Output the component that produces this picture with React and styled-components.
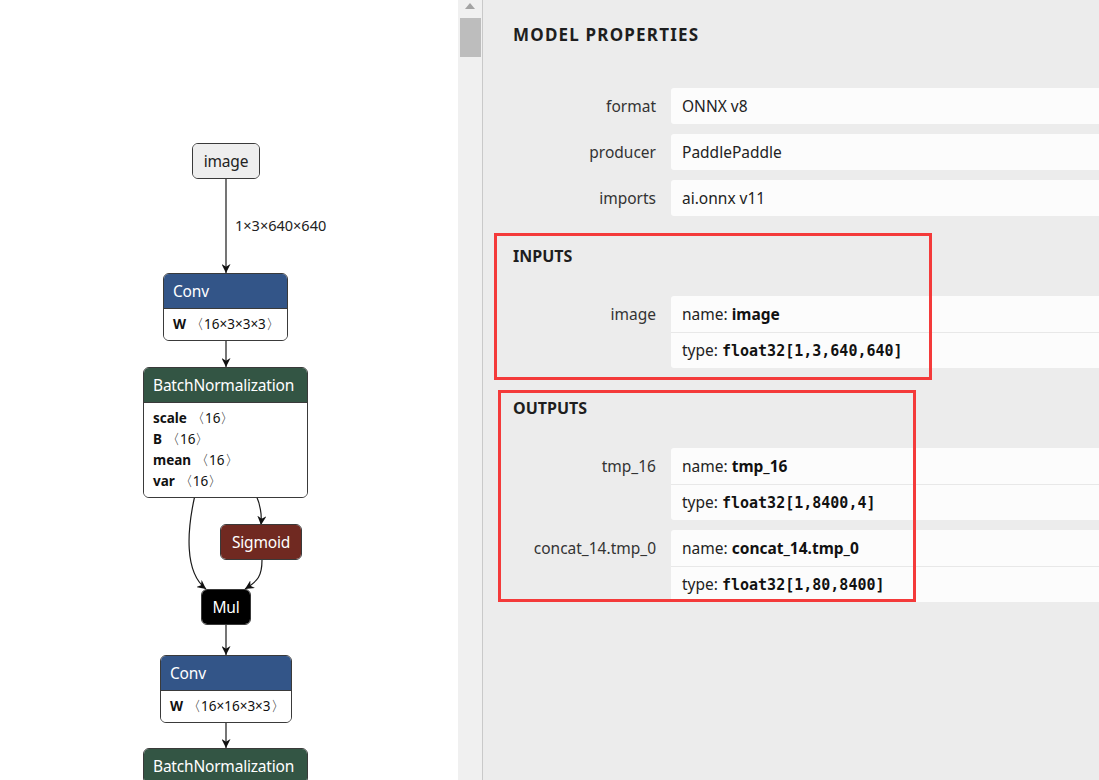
import React from 'react'
import styled, { createGlobalStyle } from 'styled-components'

const GlobalStyle = createGlobalStyle`
  html, body {
    margin: 0;
    padding: 0;
    overflow: hidden;
    background: #ffffff;
  }
  body {
    font-family: "Noto Sans", "Open Sans", sans-serif;
  }
`

const Page = styled.div`
  display: flex;
  width: 1099px;
  height: 780px;
  overflow: hidden;
`

const GraphPane = styled.div`
  position: relative;
  flex: none;
  width: 458px;
  height: 100%;
  background: #ffffff;
  overflow: hidden;
`

const Edges = styled.svg`
  position: absolute;
  left: 0;
  top: 0;
  width: 100%;
  height: 100%;
  pointer-events: none;
`

const Node = styled.div`
  position: absolute;
  left: ${p => p.$x}px;
  top: ${p => p.$y}px;
  width: ${p => p.$w}px;
  box-sizing: border-box;
  border: 1px solid #3a3a3a;
  border-radius: 6px;
  overflow: hidden;
  background: ${p => p.$bg || '#ffffff'};
`

const NodeHeader = styled.div`
  height: 34px;
  display: flex;
  align-items: center;
  justify-content: ${p => (p.$center ? 'center' : 'flex-start')};
  padding: 0 9px;
  background: ${p => p.$color};
  color: ${p => p.$text || '#ffffff'};
  font-size: 15.5px;
  letter-spacing: -0.2px;
  border-bottom: ${p => (p.$divided ? '1px solid #3a3a3a' : 'none')};
`

const NodeBody = styled.div`
  padding: 5px 9px 5px;
  background: #ffffff;
`

const Attr = styled.div`
  height: 21px;
  line-height: 21px;
  font-size: 13.5px;
  color: #111;
  white-space: nowrap;

  b {
    font-weight: 700;
    margin-right: 4px;
  }
`

const EdgeLabel = styled.div`
  position: absolute;
  left: ${p => p.$x}px;
  top: ${p => p.$y}px;
  font-size: 14.5px;
  color: #222;
  white-space: nowrap;
`

const ScrollTrack = styled.div`
  flex: none;
  width: 24px;
  height: 100%;
  background: #f0f0f0;
  border-right: 1px solid #c9c9c9;
  display: flex;
  flex-direction: column;
  align-items: center;
`

const ScrollArrow = styled.div`
  margin-top: 3px;
  width: 0;
  height: 0;
  border-left: 5px solid transparent;
  border-right: 5px solid transparent;
  border-bottom: 6px solid #a3a3a3;
`

const ScrollThumb = styled.div`
  margin-top: 9px;
  margin-left: 1px;
  width: 21px;
  height: 39px;
  background: #bdbdbd;
`

const Sidebar = styled.div`
  position: relative;
  flex: 1;
  height: 100%;
  background: #ececec;
  padding: 25px 0 0 30px;
  box-sizing: border-box;
  color: #222;
  overflow: hidden;
`

const Title = styled.div`
  font-size: 17px;
  line-height: 20px;
  font-weight: 700;
  letter-spacing: 1.2px;
  color: #1e1e1e;
  margin-bottom: 43px;
`

const SectionTitle = styled.div`
  font-size: 16px;
  line-height: 20px;
  font-weight: 700;
  color: #1e1e1e;
  margin: 30px 0 30px;
`

const Row = styled.div`
  display: grid;
  grid-template-columns: 143px 1fr;
  column-gap: 15px;
  margin-bottom: 10px;
`

const Label = styled.div`
  text-align: right;
  line-height: 36px;
  font-size: 15.5px;
  color: #333;
  white-space: nowrap;
`

const Value = styled.div`
  background: #fcfcfc;
  border-radius: 3px 0 0 3px;
`

const ValueLine = styled.div`
  height: 36px;
  line-height: 36px;
  padding: 0 11px;
  font-size: 15.5px;
  color: #222;
  white-space: nowrap;
  & + & {
    border-top: 1px solid #e8e8e8;
    height: 35px;
    line-height: 35px;
  }

  b {
    font-weight: 700;
    color: #111;
  }
`

const Mono = styled.span`
  font-family: "DejaVu Sans Mono", "Liberation Mono", monospace;
  font-weight: 700;
  font-size: 15px;
  color: #111;
`

const Highlight = styled.div`
  position: absolute;
  left: ${p => p.$x}px;
  top: ${p => p.$y}px;
  width: ${p => p.$w}px;
  height: ${p => p.$h}px;
  box-sizing: border-box;
  border: 3px solid #f43a3a;
  pointer-events: none;
`

const Arrowhead = () => (
  <marker id="arrow" viewBox="0 0 10 10" refX="10" refY="5" markerWidth="9" markerHeight="9" markerUnits="userSpaceOnUse" orient="auto">
    <path d="M0,0 L10,5 L0,10 L3,5 z" fill="#111" />
  </marker>
)

const Graph = () => (
  <GraphPane>
    <Edges>
      <defs>
        <Arrowhead />
      </defs>
      <g fill="none" stroke="#1a1a1a" strokeWidth="1.2">
        <path d="M226 178 L226 273" markerEnd="url(#arrow)" />
        <path d="M226 339 L226 367" markerEnd="url(#arrow)" />
        <path d="M195 495 C187 530, 184 572, 206 589" markerEnd="url(#arrow)" />
        <path d="M256 495 C261 506, 262 514, 261 525" markerEnd="url(#arrow)" />
        <path d="M262 560 C262 576, 258 581, 245 589" markerEnd="url(#arrow)" />
        <path d="M226 624 L226 655" markerEnd="url(#arrow)" />
        <path d="M226 719 L226 748" markerEnd="url(#arrow)" />
      </g>
    </Edges>

    <Node $x={192} $y={143} $w={68} $bg="#eeeeee">
      <NodeHeader $color="#eeeeee" $text="#222" $center>image</NodeHeader>
    </Node>
    <EdgeLabel $x={235} $y={215}>1×3×640×640</EdgeLabel>

    <Node $x={163} $y={273} $w={125}>
      <NodeHeader $color="#335588" $divided>Conv</NodeHeader>
      <NodeBody>
        <Attr><b>W</b>〈16×3×3×3〉</Attr>
      </NodeBody>
    </Node>

    <Node $x={143} $y={367} $w={165}>
      <NodeHeader $color="#335544" $divided>BatchNormalization</NodeHeader>
      <NodeBody>
        <Attr><b>scale</b>〈16〉</Attr>
        <Attr><b>B</b>〈16〉</Attr>
        <Attr><b>mean</b>〈16〉</Attr>
        <Attr><b>var</b>〈16〉</Attr>
      </NodeBody>
    </Node>

    <Node $x={220} $y={524} $w={82} $bg="#702921">
      <NodeHeader $color="#702921" $center>Sigmoid</NodeHeader>
    </Node>

    <Node $x={201} $y={589} $w={50} $bg="#000000">
      <NodeHeader $color="#000000" $center>Mul</NodeHeader>
    </Node>

    <Node $x={160} $y={655} $w={132}>
      <NodeHeader $color="#335588" $divided>Conv</NodeHeader>
      <NodeBody>
        <Attr><b>W</b>〈16×16×3×3〉</Attr>
      </NodeBody>
    </Node>

    <Node $x={143} $y={748} $w={165}>
      <NodeHeader $color="#335544">BatchNormalization</NodeHeader>
    </Node>
  </GraphPane>
)

const Property = ({ label, children }) => (
  <Row>
    <Label>{label}</Label>
    <Value>{children}</Value>
  </Row>
)

const Tensor = ({ name, type }) => (
  <>
    <ValueLine>name: <b>{name}</b></ValueLine>
    <ValueLine>type: <Mono>{type}</Mono></ValueLine>
  </>
)

const App = () => {
  return (
    <Page>
      <GlobalStyle />
      <Graph />
      <ScrollTrack>
        <ScrollArrow />
        <ScrollThumb />
      </ScrollTrack>
      <Sidebar>
        <Title>MODEL PROPERTIES</Title>
        <Property label="format"><ValueLine>ONNX v8</ValueLine></Property>
        <Property label="producer"><ValueLine>PaddlePaddle</ValueLine></Property>
        <Property label="imports"><ValueLine>ai.onnx v11</ValueLine></Property>

        <SectionTitle>INPUTS</SectionTitle>
        <Property label="image">
          <Tensor name="image" type="float32[1,3,640,640]" />
        </Property>

        <SectionTitle>OUTPUTS</SectionTitle>
        <Property label="tmp_16">
          <Tensor name="tmp_16" type="float32[1,8400,4]" />
        </Property>
        <Property label="concat_14.tmp_0">
          <Tensor name="concat_14.tmp_0" type="float32[1,80,8400]" />
        </Property>

        <Highlight $x={11} $y={233} $w={438} $h={147} />
        <Highlight $x={15} $y={390} $w={418} $h={212} />
      </Sidebar>
    </Page>
  )
}

export default App
